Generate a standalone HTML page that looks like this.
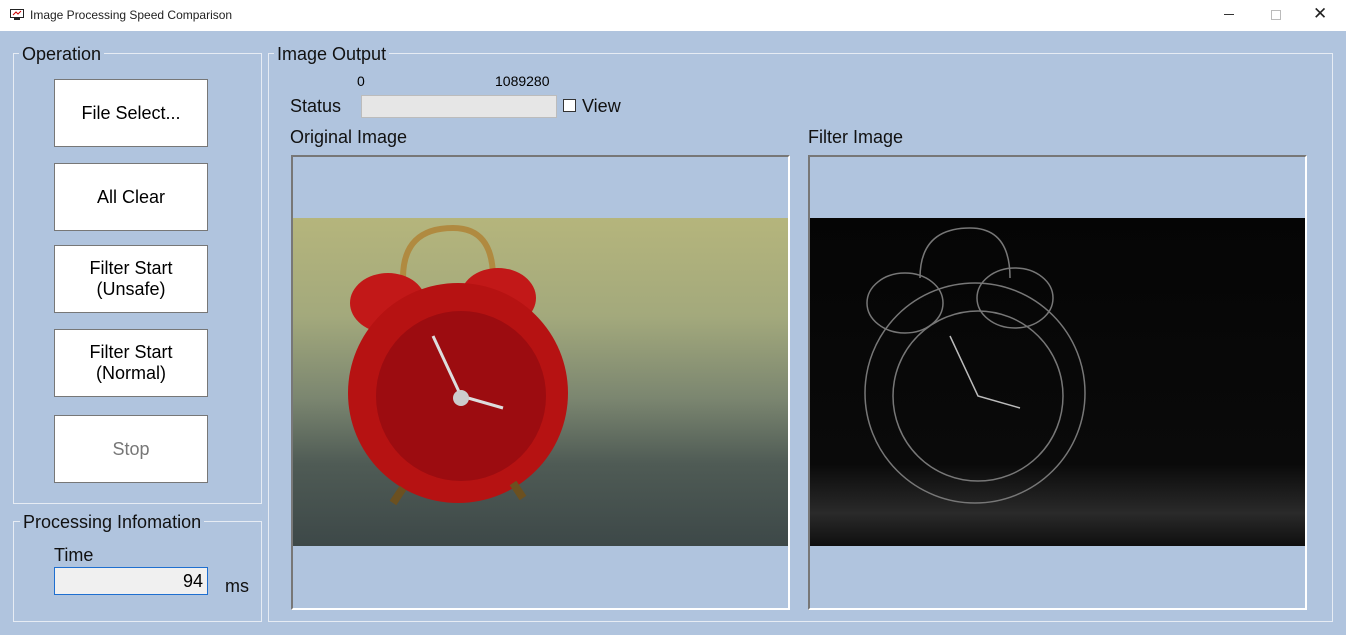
<!DOCTYPE html>
<html><head><style>
*{margin:0;padding:0;box-sizing:border-box}
body{width:1346px;height:635px;background:#b0c4de;font-family:"Liberation Sans","Noto Sans CJK JP",sans-serif;position:relative;overflow:hidden;color:#000}
.a{position:absolute}
.title{left:0;top:0;width:1346px;height:31px;background:#fff;font-size:12px}
.grp{border:1px solid #e6ecf4;}
.lbl{background:#b0c4de;padding:0 3px;font-size:18px;line-height:20px;color:#111}
.btn{background:#fff;border:1px solid #777;font-size:18px;text-align:center;display:flex;align-items:center;justify-content:center;line-height:21px}
.t{font-size:18px;color:#111}
</style></head><body>
<div class="a title">
  <svg class="a" style="left:10px;top:9px" width="14" height="12" viewBox="0 0 14 12"><rect x="0.5" y="0.5" width="13" height="8" fill="#fff" stroke="#222"/><path d="M3 6 L6 3 L8 5 L11 2" stroke="#c00" fill="none"/><rect x="4" y="9" width="6" height="2" fill="#222"/></svg>
  <div class="a" style="left:30px;top:8px;color:#222">Image Processing Speed Comparison</div>
  <div class="a" style="left:1224px;top:14px;width:10px;height:1px;background:#333"></div>
  <div class="a" style="left:1271px;top:10px;width:10px;height:10px;border:1px solid #bbb"></div>
  <div class="a" style="left:1313px;top:4px;font-size:17px;color:#222">✕</div>
</div>

<div class="a grp" style="left:13px;top:53px;width:249px;height:451px"></div>
<div class="a lbl" style="left:19px;top:44px">Operation</div>
<div class="a btn" style="left:54px;top:79px;width:154px;height:68px">File Select...</div>
<div class="a btn" style="left:54px;top:163px;width:154px;height:68px">All Clear</div>
<div class="a btn" style="left:54px;top:245px;width:154px;height:68px">Filter Start<br>(Unsafe)</div>
<div class="a btn" style="left:54px;top:329px;width:154px;height:68px">Filter Start<br>(Normal)</div>
<div class="a btn" style="left:54px;top:415px;width:154px;height:68px;color:#777">Stop</div>

<div class="a grp" style="left:13px;top:521px;width:249px;height:101px"></div>
<div class="a lbl" style="left:20px;top:512px">Processing Infomation</div>
<div class="a t" style="left:54px;top:545px">Time</div>
<div class="a" style="left:54px;top:567px;width:154px;height:28px;background:#f0f0f0;border:1px solid #1e6fd0;font-size:18px;text-align:right;padding-right:4px;line-height:26px">94</div>
<div class="a t" style="left:225px;top:576px">ms</div>

<div class="a grp" style="left:268px;top:53px;width:1065px;height:569px"></div>
<div class="a lbl" style="left:274px;top:44px">Image Output</div>
<div class="a" style="left:357px;top:73px;font-size:14px">0</div>
<div class="a" style="left:495px;top:73px;font-size:14px">1089280</div>
<div class="a t" style="left:290px;top:96px">Status</div>
<div class="a" style="left:361px;top:95px;width:196px;height:23px;background:#e6e6e6;border:1px solid #bcbcbc"></div>
<div class="a" style="left:563px;top:99px;width:13px;height:13px;background:#fff;border:1px solid #333"></div>
<div class="a t" style="left:582px;top:96px">View</div>
<div class="a t" style="left:290px;top:127px">Original Image</div>
<div class="a t" style="left:808px;top:127px">Filter Image</div>

<div class="a" style="left:291px;top:155px;width:499px;height:455px;border:2px solid;border-color:#777 #fff #fff #777"></div>
<div class="a" style="left:293px;top:218px;width:495px;height:328px;background:linear-gradient(180deg,#b5b57c 0%,#a3a97c 30%,#7b8670 55%,#4f5b55 75%,#3d4848 100%)">
  <svg width="495" height="328" viewBox="0 0 495 328">
    <path d="M110 60 Q110 10 160 10 Q200 10 200 60" stroke="#b08a40" stroke-width="6" fill="none"/>
    <ellipse cx="95" cy="85" rx="38" ry="30" fill="#c21818"/>
    <ellipse cx="205" cy="80" rx="38" ry="30" fill="#c21818"/>
    <circle cx="165" cy="175" r="110" fill="#b61212"/>
    <circle cx="168" cy="178" r="85" fill="#9c0c10"/>
    <path d="M140 118 L168 178 L210 190" stroke="#ddd" stroke-width="3" fill="none"/>
    <circle cx="168" cy="180" r="8" fill="#ccc"/>
    <path d="M110 270 L100 285 M220 265 L230 280" stroke="#6b5020" stroke-width="8"/>
  </svg>
</div>
<div class="a" style="left:808px;top:155px;width:499px;height:455px;border:2px solid;border-color:#777 #fff #fff #777"></div>
<div class="a" style="left:810px;top:218px;width:495px;height:328px;background:linear-gradient(180deg,#050505 0%,#0a0a0a 75%,#2a2a2a 90%,#0f0f0f 100%)">
  <svg width="495" height="328" viewBox="0 0 495 328" fill="none" stroke="#777" stroke-width="1.5">
    <path d="M110 60 Q110 10 160 10 Q200 10 200 60"/>
    <ellipse cx="95" cy="85" rx="38" ry="30"/>
    <ellipse cx="205" cy="80" rx="38" ry="30"/>
    <circle cx="165" cy="175" r="110"/>
    <circle cx="168" cy="178" r="85"/>
    <path d="M140 118 L168 178 L210 190" stroke="#bbb"/>
  </svg>
</div>
</body></html>
